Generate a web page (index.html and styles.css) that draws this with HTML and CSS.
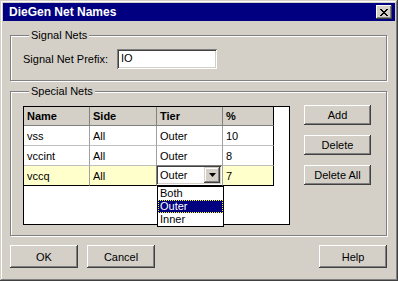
FILE: index.html
```html
<!DOCTYPE html>
<html lang="en">
<head>
    <meta charset="UTF-8">
    <title>DieGen Net Names</title>
    <link rel="stylesheet" href="styles.css">
</head>
<body>
    <div class="window">
        <div class="titlebar">
            <span class="title">DieGen Net Names</span>
            <span class="close-btn">
                <svg width="8" height="7" viewBox="0 0 8 7">
                    <path d="M0 0h2v1h1v1h2v-1h1v-1h2v1h-1v1h-1v1h-1v1h1v1h1v1h1v1h-2v-1h-1v-1h-2v1h-1v1h-2v-1h1v-1h1v-1h1v-1h-1v-1h-1v-1h-1z" fill="#000"/>
                </svg>
            </span>
        </div>

        <div class="dialog-body">
            <fieldset class="group group-signal">
                <legend>Signal Nets</legend>
                <div class="field-row">
                    <span class="field-label">Signal Net Prefix:</span>
                    <div class="text-input">IO</div>
                </div>
            </fieldset>

            <fieldset class="group group-special">
                <legend>Special Nets</legend>
                <div class="special-row">
                    <div class="grid">
                        <div class="grid-row grid-head">
                            <div class="cell">Name</div>
                            <div class="cell">Side</div>
                            <div class="cell">Tier</div>
                            <div class="cell">%</div>
                        </div>
                        <div class="grid-row">
                            <div class="cell">vss</div>
                            <div class="cell">All</div>
                            <div class="cell">Outer</div>
                            <div class="cell">10</div>
                        </div>
                        <div class="grid-row">
                            <div class="cell">vccint</div>
                            <div class="cell">All</div>
                            <div class="cell">Outer</div>
                            <div class="cell">8</div>
                        </div>
                        <div class="grid-row current last">
                            <div class="cell">vccq</div>
                            <div class="cell">All</div>
                            <div class="cell cell-edit">
                                <div class="combo">
                                    <span class="combo-text">Outer</span>
                                    <span class="combo-arrow">
                                        <svg width="7" height="4" viewBox="0 0 7 4"><path d="M0 0h7l-3.5 4z" fill="#000"/></svg>
                                    </span>
                                </div>
                            </div>
                            <div class="cell">7</div>
                        </div>

                        <ul class="combo-list">
                            <li>Both</li>
                            <li class="selected">Outer</li>
                            <li>Inner</li>
                        </ul>
                    </div>

                    <div class="side-buttons">
                        <button class="btn">Add</button>
                        <button class="btn">Delete</button>
                        <button class="btn">Delete All</button>
                    </div>
                </div>
            </fieldset>

            <div class="footer">
                <button class="btn btn-wide">OK</button>
                <button class="btn btn-wide">Cancel</button>
                <span class="spacer"></span>
                <button class="btn btn-wide">Help</button>
            </div>
        </div>
    </div>
</body>
</html>
```

FILE: styles.css
```css
body {
    margin: 0;
    font-family: "Liberation Sans", Arial, sans-serif;
    font-size: 11px;
    color: #000;
}
.window {
    width: 398px;
    height: 281px;
    box-sizing: border-box;
    padding: 3px;
    background: #d4d0c8;
    box-shadow: inset -1px -1px #404040, inset 1px 1px #d4d0c8, inset -2px -2px #808080, inset 2px 2px #fff;
}
.titlebar {
    height: 18px;
    background: #000080;
    display: flex;
    align-items: center;
    justify-content: space-between;
    padding: 0 3px 0 6px;
}
.title {
    color: #fff;
    font-weight: bold;
    font-size: 12px;
}
.close-btn {
    width: 16px;
    height: 14px;
    box-sizing: border-box;
    background: #d4d0c8;
    display: flex;
    align-items: center;
    justify-content: center;
    box-shadow: inset -1px -1px #404040, inset 1px 1px #fff, inset -2px -2px #808080;
}
.dialog-body {
    padding: 8px 8px 0 7px;
}

/* group boxes */
.group {
    margin: 0;
    padding: 0;
    min-width: 0;
    border: 1px solid #808080;
    box-shadow: 1px 1px 0 #fff, inset 1px 1px 0 #fff;
}
.group legend {
    margin-left: 6px;
    padding: 0 2px;
    line-height: 13px;
    background: #d4d0c8;
}
.group-signal {
    padding: 7px 12px 11px;
}
.group-special {
    margin-top: 4px;
    padding: 7px 12px 10px;
}

.field-row {
    display: flex;
    align-items: center;
}
.field-label {
    width: 94px;
}
.text-input {
    width: 100px;
    height: 20px;
    box-sizing: border-box;
    padding: 3px 4px;
    background: #fff;
    box-shadow: inset 1px 1px #808080, inset -1px -1px #fff, inset 2px 2px #404040, inset -2px -2px #d4d0c8;
}

/* special nets grid */
.special-row {
    display: flex;
    align-items: flex-start;
}
.grid {
    position: relative;
    margin-top: 1px;
    width: 267px;
    height: 119px;
    box-sizing: border-box;
    border: 1px solid #000;
    background: #fff;
}
.grid-row {
    display: grid;
    grid-template-columns: 66px 67px 66px 51px;
}
.cell {
    height: 20px;
    box-sizing: border-box;
    padding: 4px 3px 0;
    border-right: 1px solid #a0a0a0;
    border-bottom: 1px solid #c0c0c0;
    white-space: nowrap;
}
.cell:last-child {
    border-right-color: #000;
}
.grid-head .cell {
    height: 19px;
    padding-top: 3px;
    background: #d4d0c8;
    font-weight: bold;
    border-right-color: #808080;
    border-bottom-color: #808080;
}
.grid-head .cell:last-child {
    border-right-color: #000;
}
.current .cell {
    background: #ffffcc;
}
.last .cell {
    border-bottom-color: #000;
}
.current .cell-edit {
    padding: 0;
    background: #fff;
}
.combo {
    margin: -1px 0 0 -1px;
    width: 66px;
    height: 20px;
    box-sizing: border-box;
    padding: 2px;
    display: flex;
    align-items: center;
    justify-content: space-between;
    background: #fff;
    box-shadow: inset 1px 1px #808080, inset -1px -1px #fff, inset 2px 2px #404040, inset -2px -2px #d4d0c8;
}
.combo-text {
    padding-left: 2px;
}
.combo-arrow {
    width: 16px;
    height: 16px;
    box-sizing: border-box;
    display: flex;
    align-items: center;
    justify-content: center;
    background: #d4d0c8;
    box-shadow: inset -1px -1px #404040, inset 1px 1px #d4d0c8, inset -2px -2px #808080, inset 2px 2px #fff;
}

/* open dropdown list */
.combo-list {
    position: absolute;
    left: 133px;
    top: 79px;
    width: 67px;
    margin: 0;
    padding: 0;
    list-style: none;
    box-sizing: border-box;
    border: 1px solid #000;
    background: #fff;
}
.combo-list li {
    height: 13px;
    line-height: 13px;
    padding-left: 2px;
}
.combo-list .selected {
    background: #000080;
    color: #fff;
    outline: 1px dotted #ffff00;
    outline-offset: -1px;
}

/* buttons */
.btn {
    width: 67px;
    height: 20px;
    padding: 0;
    border: none;
    background: #d4d0c8;
    font-family: "Liberation Sans", Arial, sans-serif;
    font-size: 11px;
    color: #000;
    box-shadow: inset -1px -1px #404040, inset 1px 1px #fff, inset -2px -2px #808080, inset 2px 2px #d4d0c8;
}
.side-buttons {
    margin-left: 14px;
    display: flex;
    flex-direction: column;
    gap: 10px;
}
.footer {
    margin-top: 9px;
    display: flex;
    gap: 9px;
}
.btn-wide {
    width: 68px;
    height: 23px;
}
.spacer {
    flex: 1;
}
```
